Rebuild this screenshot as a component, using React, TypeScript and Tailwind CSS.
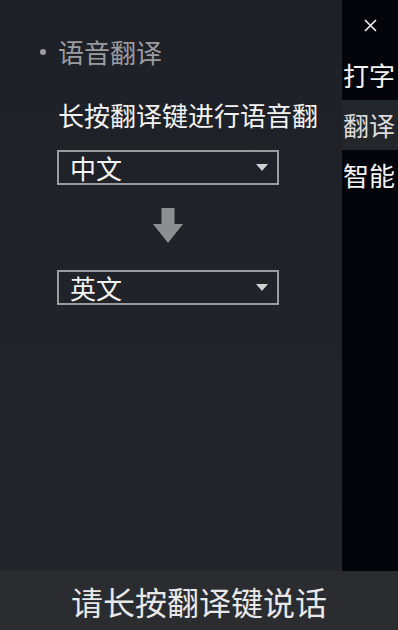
import React from 'react';

const font = { fontFamily: '"Noto Sans CJK SC", "Noto Sans", sans-serif' };

function LangSelect({ value }: { value: string }) {
  return (
    <div className="flex h-[35px] w-[222px] items-center justify-between border-2 border-[#9a9b9d] pl-[11px] pr-[9px]">
      <span className="text-[26px] leading-[30px] text-[#f2f2f2]">{value}</span>
      <svg width="12" height="7" viewBox="0 0 12 7">
        <path d="M0 0 H12 L6 7 Z" fill="#d0d0d0" />
      </svg>
    </div>
  );
}

export default function App() {
  const tabs = [
    { label: '打字', active: false },
    { label: '翻译', active: true },
    { label: '智能', active: false },
  ];

  return (
    <div className="flex h-[630px] w-[398px] flex-col overflow-hidden bg-[#04050a]" style={font}>
      <div className="flex flex-1 min-h-0">
        {/* main panel */}
        <div className="flex w-[342px] flex-col bg-gradient-to-b from-[#1d2127] to-[#23252a] pl-[40px] pt-[37px]">
          <div className="flex items-center gap-[12px]">
            <div className="h-[6px] w-[6px] rounded-full bg-[#9a9ca0]" />
            <span className="text-[26px] leading-[30px] text-[#9a9ca0]">语音翻译</span>
          </div>

          <div className="ml-[18px] mt-[33px] w-[260px] overflow-hidden whitespace-nowrap text-[26px] leading-[30px] text-[#f2f2f2]">
            长按翻译键进行语音翻译
          </div>

          <div className="ml-[17px] mt-[20px] flex w-[222px] flex-col items-center">
            <LangSelect value="中文" />
            <svg className="mt-[23px]" width="30" height="35" viewBox="0 0 30 35">
              <path d="M8.5 0 H21.5 V16 H30 L15 35 L0 16 H8.5 Z" fill="#8c8e92" />
            </svg>
            <div className="mt-[27px]">
              <LangSelect value="英文" />
            </div>
          </div>
        </div>

        {/* side bar */}
        <div className="flex w-[56px] flex-col bg-[#04050a]">
          <div className="flex h-[50px] items-center justify-center">
            <svg width="13" height="13" viewBox="0 0 13 13">
              <path d="M1 1 L12 12 M12 1 L1 12" stroke="#f2f2f2" strokeWidth="1.6" />
            </svg>
          </div>
          {tabs.map((t) => (
            <div
              key={t.label}
              className={`flex h-[50px] items-center pl-[1px] text-[26px] leading-[30px] ${
                t.active ? 'bg-[#23262b] text-[#dcdcdc]' : 'text-[#f4f4f4]'
              }`}
            >
              {t.label}
            </div>
          ))}
        </div>
      </div>

      {/* bottom bar */}
      <div className="flex h-[59px] items-center justify-center bg-[#2a2c30]">
        <span className="text-[32px] leading-[36px] text-[#e8e8e8]">请长按翻译键说话</span>
      </div>
    </div>
  );
}
